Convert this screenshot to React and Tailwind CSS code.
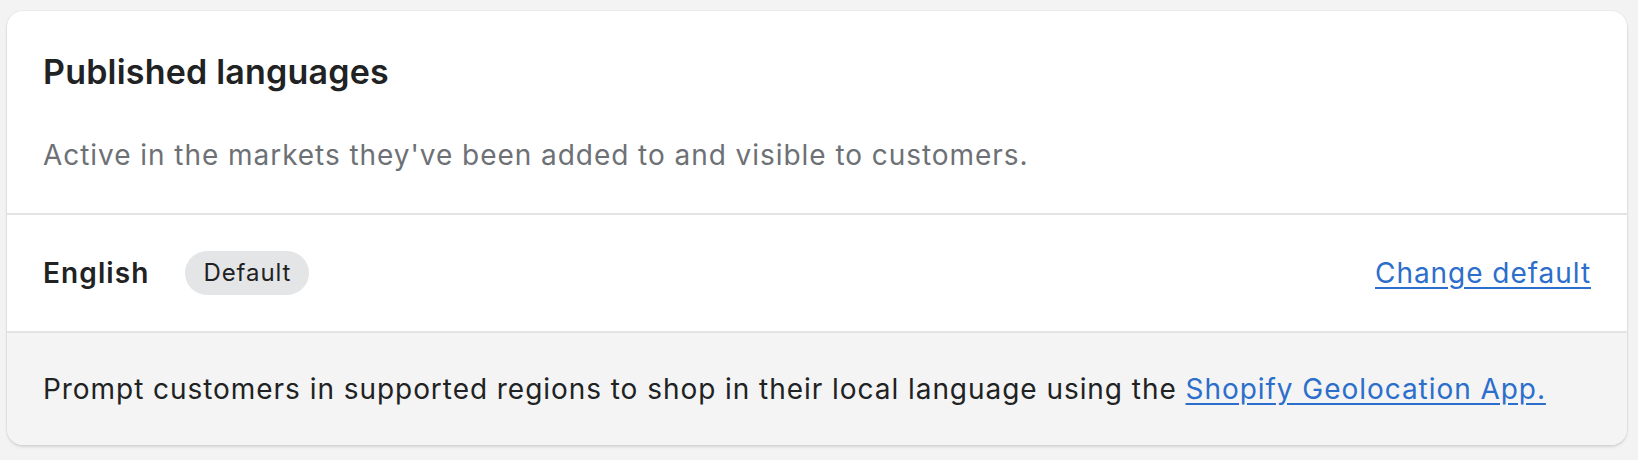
import React from "react";

const FONT = { fontFamily: "Inter, 'Noto Sans', sans-serif" };

export default function App() {
  return (
    <div className="min-h-[460px] bg-[#f3f3f3] pt-[11px] pl-[7px] pr-[11px] pb-[15px]" style={FONT}>
      <div className="w-[1620px] overflow-hidden rounded-2xl bg-white shadow-[0_2px_3px_rgba(0,0,0,0.12),0_0_0_1px_rgba(0,0,0,0.03)]">
        {/* Header */}
        <div className="px-[36px] pt-[41px] pb-[38px] border-b-2 border-[#e3e3e3]">
          <h2 className="text-[34px] leading-[40px] font-semibold tracking-[0.2px] text-[#202223]">
            Published languages
          </h2>
          <p className="mt-[43px] text-[28px] leading-[40px] tracking-[0.95px] text-[#6d7175]">
            Active in the markets they've been added to and visible to customers.
          </p>
        </div>

        {/* Language row */}
        <div className="flex items-center justify-between px-[36px] py-[36px] border-b-2 border-[#e3e3e3]">
          <div className="flex items-center gap-[36px]">
            <span className="text-[28px] leading-[40px] font-semibold tracking-[1.1px] text-[#202223]">English</span>
            <span className="flex h-[44px] items-center rounded-full bg-[#e4e5e7] px-[18px] text-[24px] tracking-[0.9px] text-[#202223]">
              Default
            </span>
          </div>
          <a href="#" className="text-[28px] leading-[40px] tracking-[0.95px] text-[#2c6ecb] underline underline-offset-[4px]">
            Change default
          </a>
        </div>

        {/* Footer */}
        <div className="bg-[#f4f4f4] px-[36px] py-[36px]">
          <p className="text-[28px] leading-[40px] tracking-[0.95px] text-[#202223]">
            Prompt customers in supported regions to shop in their local language using the{" "}
            <a href="#" className="text-[#2c6ecb] underline underline-offset-[4px]">
              Shopify Geolocation App.
            </a>
          </p>
        </div>
      </div>
    </div>
  );
}
